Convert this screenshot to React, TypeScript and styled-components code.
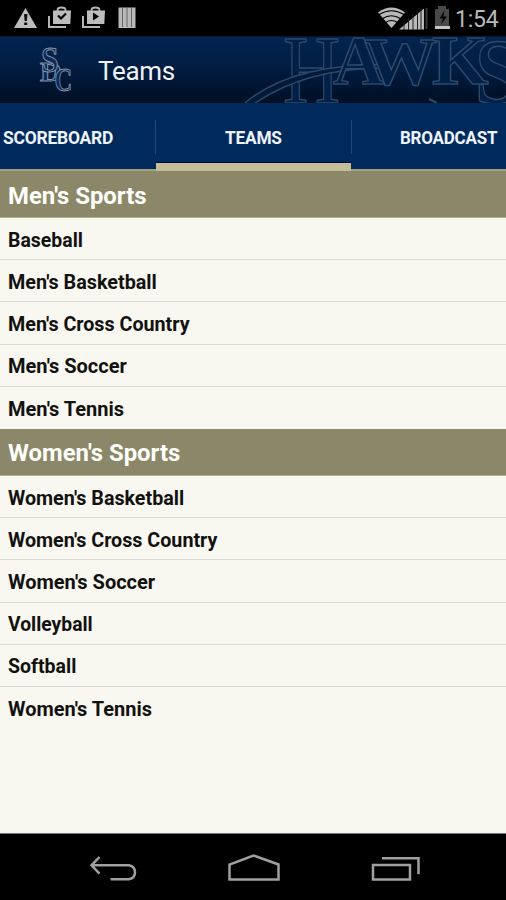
import React from 'react';
import styled, { createGlobalStyle } from 'styled-components';

const Global = createGlobalStyle`
  * { box-sizing: border-box; }
  body { margin: 0; background: #000; font-family: Roboto, sans-serif; }
`;

const Screen = styled.div`
  width: 506px;
  height: 900px;
  display: flex;
  flex-direction: column;
  overflow: hidden;
  background: #f9f8f0;
`;

const StatusBar = styled.header`
  height: 36px;
  flex: none;
  display: flex;
  justify-content: space-between;
  background: #000;
`;

const Clock = styled.time`
  width: 51px;
  padding-top: 6px;
  font-size: 23px;
  line-height: 27px;
  letter-spacing: -0.2px;
  color: #b9b9b9;
`;

const StatusGroup = styled.div`
  display: flex;
`;

const ActionBar = styled.div`
  position: relative;
  height: 67px;
  flex: none;
  display: flex;
  align-items: center;
  background: linear-gradient(#02244f, #011d42 45%, #00132c 85%, #001026);
  border-top: 1px solid #03162f;
`;

const Watermark = styled.svg`
  position: absolute;
  right: 0;
  top: -1px;
`;

const Crest = styled.svg`
  margin-left: 36px;
  flex: none;
`;

const Title = styled.h1`
  margin: 1px 0 0 22px;
  font-size: 26px;
  font-weight: 400;
  line-height: 32px;
  letter-spacing: -0.3px;
  color: #f0f2f5;
`;

const Tabs = styled.nav`
  height: 68px;
  flex: none;
  display: grid;
  grid-template-columns: 156px 195px 155px;
  background: #002a5c;
`;

const Tab = styled.div<{ $active?: boolean; $align: string; $pad: string; $divider?: boolean }>`
  position: relative;
  display: flex;
  align-items: center;
  justify-content: ${(p) => p.$align};
  padding: ${(p) => p.$pad};
  border-bottom: ${(p) => (p.$active ? '8px solid #c5bf98' : '2px solid #a19f80')};
  box-shadow: ${(p) => (p.$active ? 'inset 0 -1px #00044c' : 'none')};
  color: #eef2fa;
  font-size: 18px;
  font-weight: 700;
  white-space: nowrap;

  &::after {
    content: '';
    display: ${(p) => (p.$divider ? 'block' : 'none')};
    position: absolute;
    right: ${(p) => (p.$active ? '-1px' : '0')};
    top: 17px;
    width: 1px;
    height: 34px;
    background: #234a78;
  }
`;

const TabLabel = styled.span<{ $width: number; $scale: number }>`
  width: ${(p) => p.$width}px;
  line-height: 22px;
  letter-spacing: -0.25px;
  transform: scaleX(${(p) => p.$scale});
  transform-origin: left center;
`;

const List = styled.main`
  flex: 1;
  background: #f9f8f0;
`;

const SectionHeader = styled.h2`
  height: 47px;
  margin: 0;
  padding: 3px 8px 0;
  display: flex;
  align-items: center;
  background: #8c8768;
  border-bottom: 1px solid #b0ad98;
  color: #fefefa;
  font-size: 24px;
  font-weight: 700;
`;

const Row = styled.div`
  height: 42.2px;
  padding: 2.4px 8px 0;
  display: flex;
  align-items: center;
  border-bottom: 1px solid #dddcd4;
  color: #121210;
  font-size: 20px;
  font-weight: 700;

  &:last-child { border-bottom: 0; }
`;

const Label = styled.span<{ $scale: number }>`
  transform: scaleX(${(p) => p.$scale});
  transform-origin: left center;
  white-space: nowrap;
`;

const NavBar = styled.footer`
  height: 67px;
  flex: none;
  background: #000;
  border-top: 1px solid #777670;
`;

const sections = [
  {
    title: "Men's Sports",
    teams: [
      { name: 'Baseball', scale: 0.972 },
      { name: "Men's Basketball", scale: 0.988 },
      { name: "Men's Cross Country", scale: 0.985 },
      { name: "Men's Soccer", scale: 1 },
      { name: "Men's Tennis", scale: 1 },
    ],
  },
  {
    title: "Women's Sports",
    teams: [
      { name: "Women's Basketball", scale: 0.985 },
      { name: "Women's Cross Country", scale: 0.985 },
      { name: "Women's Soccer", scale: 1 },
      { name: 'Volleyball', scale: 0.965 },
      { name: 'Softball', scale: 0.975 },
      { name: "Women's Tennis", scale: 0.997 },
    ],
  },
];

const Bag = ({ x, play }: { x: number; play?: boolean }) => (
  <g transform={`translate(${x} 0)`}>
    <path d="M1 16v11h17" fill="none" stroke="#b5b5b5" strokeWidth="2" />
    <path d="M9.500 12V10q0-2.500 4-2.500t4 2.500v2" fill="none" stroke="#b5b5b5" strokeWidth="1.8" />
    <path d="M5 10.500h18l-.7 13.500H5z" fill="#bdbdbd" />
    {play ? <path d="M11 12.500v8l6-4z" fill="#000" /> : <path d="M10 15.500l3 3 5-5" fill="none" stroke="#000" strokeWidth="2.2" />}
  </g>
);

const Notifications = () => (
  <svg width="150" height="36">
    <path d="M25.500 8L37 28H14z" fill="#bdbdbd" />
    <path d="M24 14h3.500l-.6 7h-2.300zM24.200 22.500h3v2.600h-3z" fill="#111" />
    <Bag x={48} />
    <Bag x={82} play />
    <path d="M118.500 7.500h17v20.500h-17z" fill="#b9b9b9" />
    <path d="M122.500 8v19M127 8v19M131.500 8v19" stroke="#666" strokeWidth="1" />
  </svg>
);

const Signals = () => (
  <svg width="82" height="36">
    <path d="M5 12.500Q18.500 2.500 32 12.500L18.500 28z" fill="#b9b9b9" />
    <path d="M6 14.500Q18.500 7 31 14.500M9.500 18.500Q18.500 13 27.500 18.500M12.500 22.500Q18.500 18.500 24.500 22.500" fill="none" stroke="#000" strokeWidth="1.2" />
    <path d="M26 29.500L51 8.500V29.500z" fill="#b9b9b9" />
    <path d="M31 22v8M35.500 18v12M40 14v16M44.500 11v19M48 9v21" stroke="#222" strokeWidth="1" />
    <path d="M53.500 8v21" stroke="#383838" strokeWidth="2" />
    <path d="M62 9h3V6h8v3h3v17H62z" fill="#484848" />
    <path d="M62 26h15v3H62z" fill="#c4c4c4" />
    <path d="M71.500 10.500l-5 8h3.500l-2 6 6-8h-3.500z" fill="#050505" />
  </svg>
);

const serif = { fontFamily: "'Liberation Serif', serif" };

const App = () => (
  <>
    <Global />
    <Screen>
      <StatusBar>
        <Notifications />
        <StatusGroup>
          <Signals />
          <Clock>1:54</Clock>
        </StatusGroup>
      </StatusBar>
      <ActionBar>
        <Watermark width="276" height="67" viewBox="0 0 276 67" {...serif} fill="#021f45" stroke="#2c4a6a" strokeWidth="1.5">
          <text transform="translate(53 66.500) scale(.79 .98)" fontSize="100">H</text>
          <path d="M15 67Q60 29 150 28.500V32Q76 33 25 67" fill="#021a3a" />
          <text transform="translate(103 48) scale(.98 .96)" fontSize="72" fontWeight="700">A</text>
          <text transform="translate(134 48) scale(1.050 .98)" fontSize="70" fontWeight="700">W</text>
          <text transform="translate(202 48) scale(1.010 .96)" fontSize="72" fontWeight="700">K</text>
          <text transform="translate(245 67) scale(.85 .98)" fontSize="96" fontWeight="700">S</text>
          <path d="M199 63l8 4" strokeWidth="2" />
        </Watermark>
        <Crest width="40" height="58" viewBox="0 0 40 58" {...serif} fill="#052b62" stroke="#87919e" strokeWidth="1" fontWeight="700">
          <text transform="translate(4 39.500) scale(1.1 1)" fontSize="27">D</text>
          <text transform="translate(18.500 50) scale(.72 1)" fontSize="34">C</text>
          <text transform="translate(5 30.500) scale(.9 1)" fontSize="35">S</text>
        </Crest>
        <Title>Teams</Title>
      </ActionBar>
      <Tabs>
        <Tab $align="flex-start" $pad="3px 0 0 3px" $divider><TabLabel $width={110} $scale={0.97}>SCOREBOARD</TabLabel></Tab>
        <Tab $align="center" $pad="9px 0 0 0" $active $divider><TabLabel $width={57} $scale={0.963}>TEAMS</TabLabel></Tab>
        <Tab $align="flex-end" $pad="3px 8px 0 0"><TabLabel $width={98} $scale={0.945}>BROADCAST</TabLabel></Tab>
      </Tabs>
      <List>
        {sections.map((s) => (
          <section key={s.title}>
            <SectionHeader><Label $scale={0.995}>{s.title}</Label></SectionHeader>
            {s.teams.map((t) => <Row key={t.name}><Label $scale={t.scale}>{t.name}</Label></Row>)}
          </section>
        ))}
      </List>
      <NavBar>
        <svg width="506" height="66" fill="none" stroke="#a0a0a0" strokeWidth="2.500">
          <path d="M99.500 23l-8 8.300 8 8.300M92 31.300h37q6 1 6 7t-6 7h-18.500" />
          <path d="M229.500 45.500V30.500L253.500 21.500 278.500 30.500V45.500z" />
          <path d="M373 31h37v14.500h-37zM382 24.200h36.500v16" />
        </svg>
      </NavBar>
    </Screen>
  </>
);

export default App;
